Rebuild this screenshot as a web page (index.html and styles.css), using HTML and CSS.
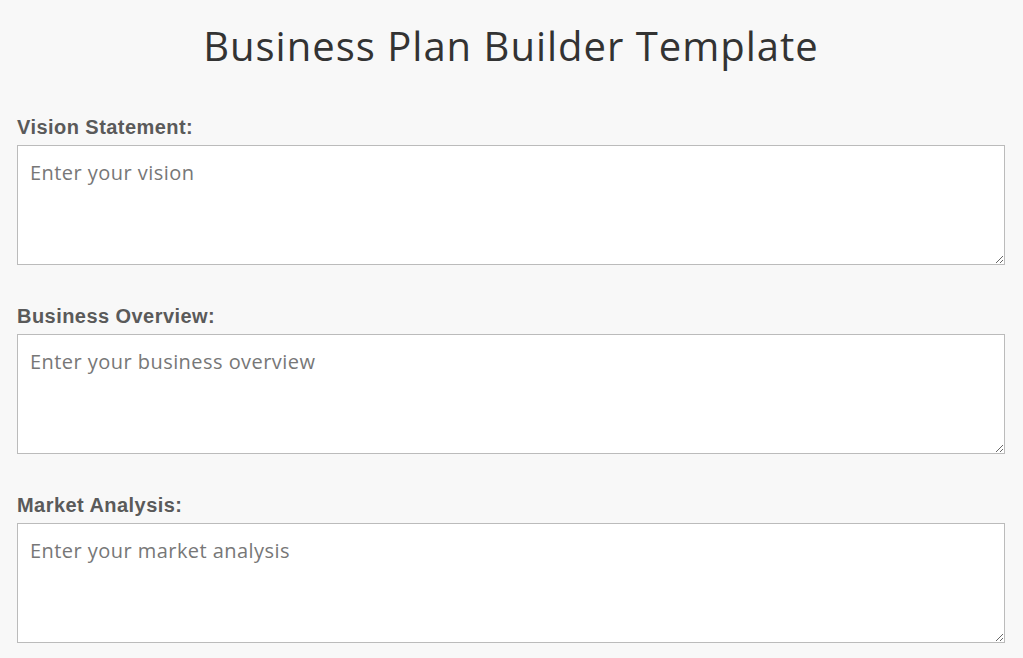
FILE: index.html
```html
<!DOCTYPE html>
<html lang="en">
<head>
    <meta charset="UTF-8">
    <meta name="viewport" content="width=device-width, initial-scale=1.0">
    <title>Business Plan Builder Template</title>
    <link rel="stylesheet" href="styles.css">
</head>
<body>
    <div class="container">
        <h1>Business Plan Builder Template</h1>

        <div class="section">
            <label for="vision">Vision Statement:</label>
            <textarea id="vision" placeholder="Enter your vision"></textarea>
        </div>

        <div class="section">
            <label for="overview">Business Overview:</label>
            <textarea id="overview" placeholder="Enter your business overview"></textarea>
        </div>

        <div class="section">
            <label for="market">Market Analysis:</label>
            <textarea id="market" placeholder="Enter your market analysis"></textarea>
        </div>
    </div>
</body>
</html>
```

FILE: styles.css
```css
* {
    margin: 0;
    padding: 0;
    box-sizing: border-box;
}

body {
    background: #f8f8f8;
    font-family: 'Open Sans', sans-serif;
    color: #333;
}

.container {
    padding: 0 18px 0 17px;
}

h1 {
    font-family: 'Open Sans', sans-serif;
    font-weight: 400;
    font-size: 40px;
    line-height: 50px;
    letter-spacing: 1px;
    text-align: center;
    color: #333;
    padding: 21px 0 45px;
}

.section {
    margin-bottom: 40px;
}

label {
    display: block;
    font-family: 'Liberation Sans', Arial, sans-serif;
    font-weight: bold;
    font-size: 20px;
    line-height: 23px;
    letter-spacing: 0.45px;
    color: #5a5a5a;
    margin-bottom: 6px;
}

textarea {
    display: block;
    width: 100%;
    height: 120px;
    padding: 13px 12px 12px;
    border: 1px solid #bbb;
    background: #fff;
    font-family: 'Open Sans', sans-serif;
    font-size: 20px;
    letter-spacing: 0.45px;
    color: #333;
}

textarea::placeholder {
    color: #777;
}
```
